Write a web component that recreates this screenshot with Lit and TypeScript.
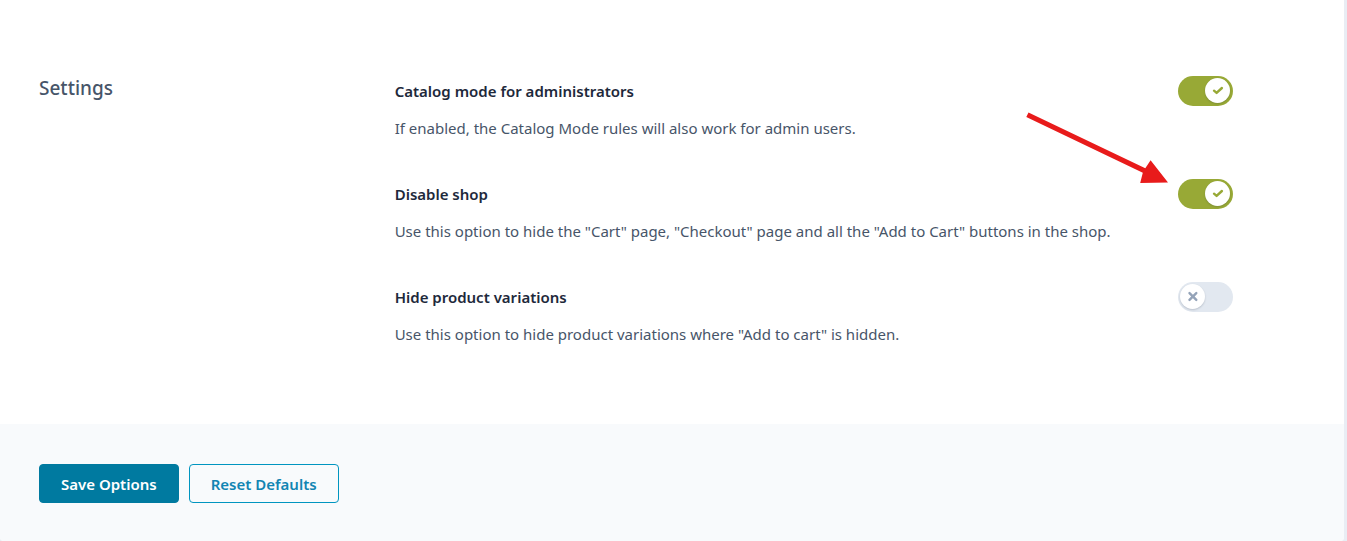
import { LitElement, html, css, svg } from "lit";
import { customElement, property, state } from "lit/decorators.js";

interface Option {
  id: string;
  title: string;
  description: string;
  enabled: boolean;
  highlighted?: boolean;
}

@customElement("toggle-switch")
class ToggleSwitch extends LitElement {
  @property({ type: Boolean, reflect: true }) checked = false;
  @property() label = "";

  static styles = css`
    :host {
      display: block;
    }
    .track {
      display: flex;
      box-sizing: border-box;
      width: 55px;
      height: 30px;
      padding: 2px 3px 3px 2px;
      border-radius: 15px;
      background: #e2e8f0;
      cursor: pointer;
    }
    :host([checked]) .track {
      justify-content: flex-end;
      background: #98a936;
    }
    .input {
      appearance: none;
      position: absolute;
      width: 1px;
      height: 1px;
      margin: 0;
      opacity: 0;
    }
    .track:focus-within {
      outline: 2px solid #0090bb;
      outline-offset: 2px;
    }
    .knob {
      display: grid;
      place-items: center;
      width: 25px;
      height: 25px;
      border-radius: 50%;
      background: #fff;
      box-shadow: 0 1px 2px rgba(30, 41, 59, 0.2);
    }
    .icon {
      display: block;
      fill: none;
      stroke: #94a3b8;
      stroke-width: 2.4;
      stroke-linecap: round;
      stroke-linejoin: round;
    }
    :host([checked]) .icon {
      stroke: #98a936;
    }
  `;

  private toggle(e: Event) {
    this.checked = (e.target as HTMLInputElement).checked;
  }

  render() {
    return html`
      <label class="track">
        <input
          class="input"
          type="checkbox"
          role="switch"
          aria-label=${this.label}
          .checked=${this.checked}
          @change=${this.toggle}
        />
        <span class="knob">
          <svg class="icon" width="13" height="13" viewBox="0 0 13 13" aria-hidden="true">
            ${this.checked
              ? svg`<path d="M3 6.7 5.6 8.9 10.9 4" />`
              : svg`<path d="M3.5 3.1 10.3 9.9M10.3 3.1 3.5 9.9" />`}
          </svg>
        </span>
      </label>
    `;
  }
}

@customElement("app-root")
class AppRoot extends LitElement {
  @state() private options: Option[] = [
    {
      id: "admin",
      title: "Catalog mode for administrators",
      description: "If enabled, the Catalog Mode rules will also work for admin users.",
      enabled: true,
    },
    {
      id: "shop",
      title: "Disable shop",
      description:
        'Use this option to hide the "Cart" page, "Checkout" page and all the "Add to Cart" buttons in the shop.',
      enabled: true,
      highlighted: true,
    },
    {
      id: "variations",
      title: "Hide product variations",
      description: 'Use this option to hide product variations where "Add to cart" is hidden.',
      enabled: false,
    },
  ];

  static styles = css`
    :host {
      display: block;
      min-height: 100vh;
      background: #e9edf4;
      font-family: "Segoe UI", "Noto Sans", "Open Sans", sans-serif;
      font-size: 15px;
      line-height: 24px;
    }
    .panel {
      display: flex;
      flex-direction: column;
      min-height: 100vh;
      margin-right: 3px;
      background: #fff;
      border-radius: 0 0 4px 4px;
      overflow: hidden;
    }
    .section {
      display: grid;
      grid-template-columns: 28fr 66fr;
      padding: 76px 111px 78px 39px;
    }
    .heading {
      margin: 0;
      color: #475569;
      font-size: 19px;
      font-weight: 500;
      line-height: 24px;
    }
    .options {
      display: flex;
      flex-direction: column;
      gap: 39px;
    }
    .option {
      display: flex;
      justify-content: space-between;
      gap: 40px;
    }
    .title {
      margin: 0 0 10px;
      color: #1e293b;
      font-size: 15px;
      font-weight: 600;
      line-height: 30px;
    }
    .description {
      margin: 0;
      color: #475569;
    }
    .control {
      position: relative;
      flex: none;
    }
    .pointer {
      position: absolute;
      right: 65px;
      top: -68px;
      pointer-events: none;
      fill: #e81b1b;
    }
    .footer {
      flex: 1;
      display: flex;
      align-items: flex-start;
      gap: 10px;
      padding: 40px 39px 38px;
      background: #f8fafc;
    }
    .button {
      padding: 8px 21px 6px;
      border: 1px solid #007aa0;
      border-radius: 4px;
      background: #007aa0;
      color: #fff;
      font-family: inherit;
      font-size: 15px;
      font-weight: 600;
      line-height: 23px;
      cursor: pointer;
    }
    .outline {
      border-color: #0095c0;
      background: transparent;
      color: #1285b3;
    }
  `;

  render() {
    return html`
      <main class="panel">
        <section class="section">
          <h2 class="heading">Settings</h2>
          <div class="options">
            ${this.options.map(
              (o) => html`
                <div class="option">
                  <div>
                    <h3 class="title">${o.title}</h3>
                    <p class="description">${o.description}</p>
                  </div>
                  <div class="control">
                    <toggle-switch .label=${o.title} ?checked=${o.enabled}></toggle-switch>
                    ${o.highlighted
                      ? html`<svg class="pointer" width="143" height="73" viewBox="0 0 143 73" aria-hidden="true">
                          <path d="M3.5 1.6 120.3 57.2 125.6 49.3 143 71.5 115.2 72 117.8 61.7 1.3 6.1Z" />
                        </svg>`
                      : ""}
                  </div>
                </div>
              `
            )}
          </div>
        </section>
        <footer class="footer">
          <button class="button" type="button">Save Options</button>
          <button class="button outline" type="button">Reset Defaults</button>
        </footer>
      </main>
    `;
  }
}
